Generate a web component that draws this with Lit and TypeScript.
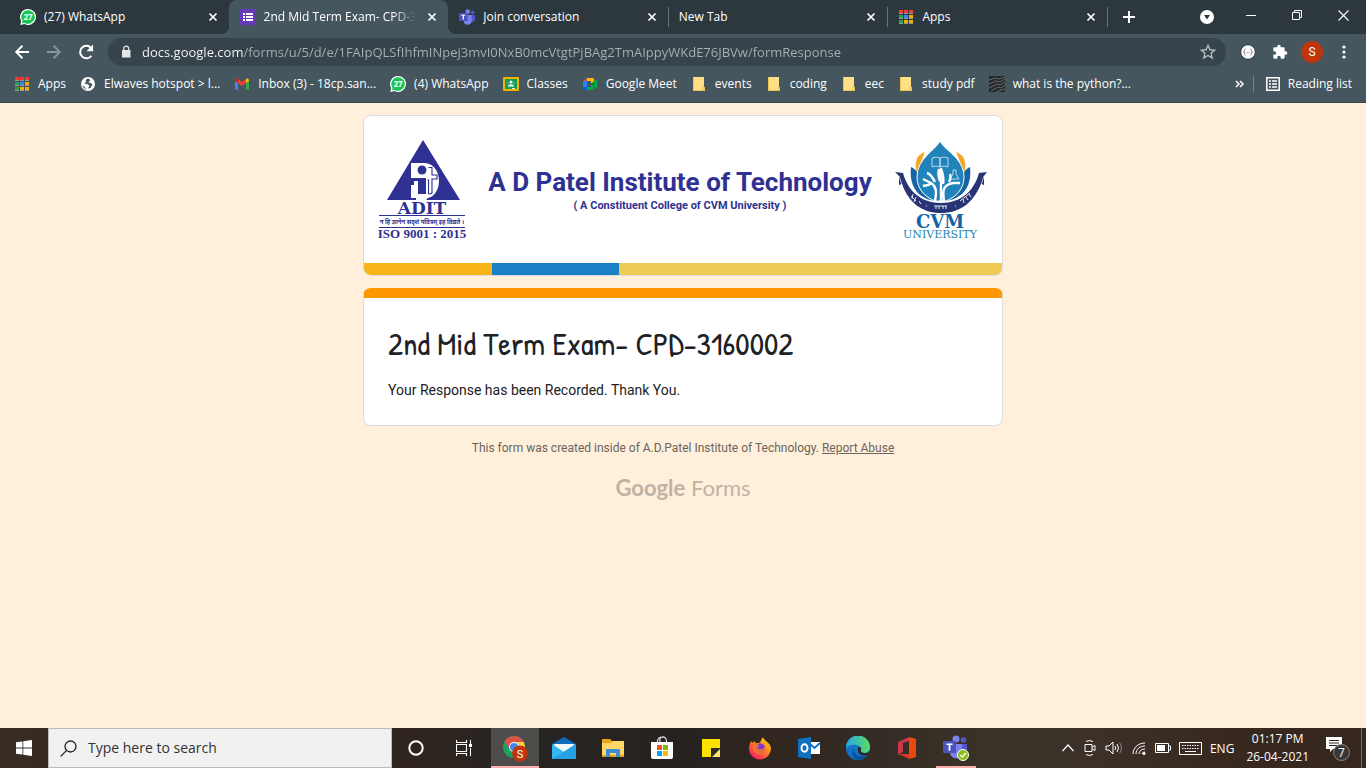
import { LitElement, html, css, svg, TemplateResult } from "lit";
import { customElement } from "lit/decorators.js";
import { classMap } from "lit/directives/class-map.js";

const whatsapp = html`<svg width="16" height="16" viewBox="0 0 16 16" aria-hidden="true">
  <path d="M8 0a8 8 0 1 1-3.6 15.1L.3 15.9l.9-3.8A8 8 0 0 1 8 0Z" fill="#fff"/>
  <path d="M8 1.2A6.8 6.8 0 1 1 4.600 13.900L2 14.300l.6-2.400A6.800 6.800 0 0 1 8 1.200Z" fill="#13c552"/>
  <text x="8" y="11" font-size="8" font-weight="700" text-anchor="middle" fill="#fff">27</text></svg>`;

const forms = html`<svg width="16" height="16" viewBox="0 0 16 16" aria-hidden="true">
  <rect width="16" height="16" fill="#673ab7"/>
  <path d="M3 4h2v2H3zM6 4h7v2H6zM3 7h2v2H3zM6 7h7v2H6zM3 10h2v2H3zM6 10h7v2H6z" fill="#fff"/></svg>`;

const teamsShapes = svg`
  <circle cx="20.500" cy="5" r="2.800" fill="#5059c9"/><path d="M17 9h7v7a4 4 0 0 1-7 2Z" fill="#5059c9"/>
  <circle cx="13" cy="4" r="3.500" fill="#7b83eb"/><path d="M7 9h12v8a6 6 0 0 1-12 1Z" fill="#7b83eb"/>
  <rect x="0" y="6" width="13" height="12" rx="1" fill="#4b53bc"/>
  <path d="M3.500 8.500h6v1.600H7.400v5.600H5.600v-5.600H3.500Z" fill="#fff"/>`;

const teams = html`<svg width="16" height="16" viewBox="0 0 24 24" aria-hidden="true">${teamsShapes}</svg>`;

const appsGrid = html`<svg width="14" height="14" viewBox="0 0 14 14" aria-hidden="true">
  <path d="M0 0h4v3H0zM5 0h4v3H5zM10 0h4v3h-4z" fill="#f03a32"/>
  <path d="M0 3h4v1H0zM5 3h4v1H5zM10 3h4v1h-4zM0 8h4v1H0zM5 8h4v1H5zM10 8h4v1h-4zM0 13h4v1H0zM5 13h4v1H5zM10 13h4v1h-4z" fill="#8c9aa2"/>
  <path d="M0 5h4v3H0zM0 10h4v3H0z" fill="#2ba24c"/><path d="M5 5h4v3H5z" fill="#3f83f2"/>
  <path d="M10 5h4v3h-4zM5 10h4v3H5zM10 10h4v3h-4z" fill="#f9ab00"/></svg>`;

const globe = html`<svg width="16" height="16" viewBox="0 0 16 16" aria-hidden="true">
  <circle cx="8" cy="8" r="7" fill="#fff"/>
  <path d="M8 2.500 5.500 4l.8 1.800L4 7.500l3 .5 2.500 1.500L8 12.500 10.500 12l2-3.500L10 6.500H8.200L10.500 4Z M1.600 9.500 5 11l1 3Z" fill="#45565f"/></svg>`;

const gmail = html`<svg width="16" height="16" viewBox="0 0 16 16" aria-hidden="true">
  <path d="M1 4v9.500h3V7Z" fill="#4285f4"/><path d="M15 4v9.500h-3V7Z" fill="#34a853"/>
  <path d="M1 4.500A1.800 1.800 0 0 1 4 3l4 3 4-3v4L8 10 4 7Z" fill="#ea4335"/>
  <path d="M1 4.500A1.800 1.800 0 0 1 4 3v4L1 5Z" fill="#c5221f"/><path d="M15 4.500A1.800 1.800 0 0 0 12 3v4l3-2Z" fill="#fbbc04"/></svg>`;

const classroom = html`<svg width="16" height="14" viewBox="0 0 16 14" aria-hidden="true">
  <rect width="16" height="14" rx="1" fill="#f4b400"/><rect x="2" y="2" width="12" height="10" fill="#0f9d58"/>
  <circle cx="8" cy="5" r="1.500" fill="#fff"/><circle cx="5" cy="6" r="1" fill="#57bb8a"/><circle cx="11" cy="6" r="1" fill="#57bb8a"/>
  <path d="M5 9.500c0-3 6-3 6 0Z" fill="#fff"/><path d="M9 11h3v1H9Z" fill="#f1f1f1"/></svg>`;

const meet = html`<svg width="16" height="14" viewBox="0 0 16 14" aria-hidden="true">
  <path d="M1 4 5 1v3Z" fill="#ea4335"/><path d="M1 4h4v6H1Z" fill="#2684fc"/><path d="M1 10h4v3H2a1 1 0 0 1-1-1Z" fill="#0066da"/>
  <path d="M5 10h6v2a1 1 0 0 1-1 1H5Z" fill="#00ac47"/><path d="M5 1h6a1 1 0 0 1 1 1v4H9V4H5Z" fill="#ffba00"/>
  <path d="M9 7l5.500-4.500q.8-.4.8.500v8q0 .9-.8.500L12 9.500V12H9Z" fill="#00ac47"/><path d="M9 7l3-2.500v5Z" fill="#00832d"/></svg>`;

const folder = html`<svg width="12" height="14" viewBox="0 0 12 14" aria-hidden="true">
  <path d="M0 0h11v10h1v4H0Z" fill="#ffe089"/><path d="M.5 0v13.500h11V10h-1.500v3" fill="none" stroke="#edc24f"/></svg>`;

const pythonThumb = html`<svg width="16" height="16" viewBox="0 0 16 16" aria-hidden="true">
  <rect width="16" height="16" fill="#26282b"/>
  <path d="M0 4 6 2l4 1 6-2M0 8l7-3 4 1 5-3M0 12l8-4 3 1 5-3M2 15l7-4 3 1 4-3M7 16l5-2 4-1" fill="none" stroke="#777b80" stroke-width=".8"/></svg>`;

const closeX = html`<svg width="16" height="16" viewBox="0 0 16 16" aria-hidden="true">
  <path d="m4.500 4.500 7 7m0-7-7 7" stroke="#fff" stroke-width="1.700"/></svg>`;

const icon24 = (body: unknown, size = 20) =>
  html`<svg width=${size} height=${size} viewBox="0 0 24 24" aria-hidden="true">${body}</svg>`;

const adit = html`<svg width="88" height="106" viewBox="0 0 88 106" role="img" aria-label="ADIT">
  <path d="M45 4 82 64H9Z" fill="#2e3192"/>
  <path d="M33 27h14c10 1 14 10 14 18 0 9-5 16-11 17l-2 2H38V62h-5V49h3v-7h-3Z" fill="#fff"/>
  <circle cx="44" cy="34" r="4.500" fill="#2e3192"/><path d="M36 42h12v16h-8V45h-4Z" fill="#2e3192"/>
  <path d="M50.500 58V44h-1M50.500 31.500h3.500V39h5v4h-5v14q-1 1-3.500 1" fill="none" stroke="#2e3192" stroke-width="1.100"/>
  <text class="slab" x="44" y="78" font-size="17" text-anchor="middle" fill="#2e3192">ADIT</text>
  <path d="M1 79.500h86M1 91.500h86" stroke="#2e3192"/>
  <text class="motto" x="44" y="88" font-size="6" text-anchor="middle" fill="#2e3192">न हि ज्ञानेन सदृशं पवित्रम् इह विद्यते ।</text>
  <text class="serif" x="44" y="102" font-size="13" text-anchor="middle" fill="#2e3192">ISO 9001 : 2015</text></svg>`;

const cvm = html`<svg width="94" height="106" viewBox="0 0 94 106" role="img" aria-label="CVM University">
  <path d="M29 18q-8 4-6 16ZM64 18q8 4 6 16Z" fill="#f5a623" stroke="#f5a623" stroke-width="2"/>
  <path d="M17 31q8 3 10 19l14 15C22 62 15 48 17 31ZM76 31q-8 3-10 19L52 65C71 62 78 48 76 31Z" fill="#1565a5"/>
  <path d="M46 5C51 15 70 22 70 41c0 12-8 20-18 24H41C31 61 23 53 23 41 23 22 41 15 46 5Z" fill="#2283bb" stroke="#fff"/>
  <path d="M41 65c2-10 1-15-4-18l-8-4m8 4c-2 3-5 2-8 3m12-4c-2-4-4-8-8-9m13 8c-2-5-2-8-1-12m2 35V32m3 33c-2-12 0-16 9-18h7m-11-1c2-3 2-5 1-8m-7 10c1-5 0-10-2-15" fill="none" stroke="#fff" stroke-width="2.400"/>
  <path d="M38 22q4-2 8 0v9q-4-2-8 0ZM54 22q-4-2-8 0v9q4-2 8 0ZM59 34h3v4l3 5h-9l3-5Z" fill="none" stroke="#d7edf8" stroke-width=".8"/>
  <path d="M1 36l8 1c5 18 18 30 38 30s33-12 38-30l8-1-3 4v9l-3-1C79 67 66 77 47 77S15 67 8 48l-3 1V40Z" fill="#293477"/>
  <path d="M5 40l3 9M90 40l-3 9" stroke="#fff" stroke-width=".7"/>
  <path d="M17 60l5 5m-3-7-1 5m4-2-2 5m5-1 2 3M40 70h13m-11 0v3m3-3v3m4-3v3m3-3v3M66 65l10-8m-7 6 1 4m2-6 2 3m1-6 2 3M32 70h1m28 0h1" fill="none" stroke="#e4e6f4"/>
  <text class="slab" x="46" y="92" font-size="18" text-anchor="middle" fill="#1464a5">CVM</text>
  <text class="uni" x="46" y="102" font-size="11" text-anchor="middle" fill="#2385b5">UNIVERSITY</text></svg>`;

interface Tab { title: string; icon?: TemplateResult; active?: boolean; ruled?: boolean }
const tabs: Tab[] = [
  { title: "(27) WhatsApp", icon: whatsapp },
  { title: "2nd Mid Term Exam- CPD-3160002", icon: forms, active: true },
  { title: "Join conversation", icon: teams },
  { title: "New Tab", ruled: true },
  { title: "Apps", icon: appsGrid, ruled: true },
];

const bookmarks: { label: string; icon: TemplateResult }[] = [
  { label: "Apps", icon: appsGrid },
  { label: "Elwaves hotspot > l...", icon: globe },
  { label: "Inbox (3) - 18cp.san...", icon: gmail },
  { label: "(4) WhatsApp", icon: whatsapp },
  { label: "Classes", icon: classroom },
  { label: "Google Meet", icon: meet },
  { label: "events", icon: folder },
  { label: "coding", icon: folder },
  { label: "eec", icon: folder },
  { label: "study pdf", icon: folder },
  { label: "what is the python?...", icon: pythonThumb },
];

@customElement("browser-chrome")
export class BrowserChrome extends LitElement {
  static styles = css`
    :host { display: block; font-family: "Open Sans", "Noto Sans", sans-serif; font-size: 12px; color: #fff; }
    svg { display: block; flex: none; }
    button { border: 0; padding: 0; background: none; color: inherit; font: inherit; display: grid; place-items: center; flex: none; }
    .strip { display: flex; height: 34px; padding-left: 9px; background: #2c373e; }
    .tabs { display: flex; flex: 0 1 1098px; min-width: 0; }
    .tab { flex: 1 1 0; min-width: 0; display: flex; align-items: center; gap: 8px; padding: 0 8px 0 11px; position: relative; }
    .icon { width: 16px; display: grid; place-items: center; flex: none; }
    .name { flex: 1; min-width: 0; overflow: hidden; white-space: nowrap; line-height: 20px; }
    .active { background: #45565f; border-radius: 8px 8px 0 0; }
    .active .name { mask-image: linear-gradient(to right, #000 85%, transparent); }
    .active::before, .active::after { content: ""; position: absolute; bottom: 0; width: 8px; height: 8px; }
    .active::before { right: 100%; background: radial-gradient(circle at 0 0, transparent 8px, #45565f 8px); }
    .active::after { left: 100%; background: radial-gradient(circle at 100% 0, transparent 8px, #45565f 8px); }
    .ruled::before { content: ""; position: absolute; left: 0; top: 7px; height: 20px; width: 1px; background: #6a757c; }
    .add { width: 44px; position: relative; }
    .grow { flex: 1; }
    .menu { width: 42px; }
    .win { width: 46px; height: 30px; }
    .bar { background: #45565f; border-bottom: 1px solid #36444c; }
    .nav { display: flex; align-items: center; height: 36px; padding: 0 6px; }
    .tool { width: 32px; height: 28px; }
    .omni { flex: 1; min-width: 0; display: flex; align-items: center; height: 28px; margin: 0 6px; padding: 0 8px 0 11px; gap: 9px; border-radius: 14px; background: #37444c; }
    .url { flex: 1; min-width: 0; border: 0; padding: 0; height: 28px; outline: 0; font: inherit; font-size: 13px;
      background: linear-gradient(to right, #fff 101px, #a9b1b5 101px); background-clip: text; -webkit-background-clip: text; color: transparent; }
    .avatar { width: 22px; height: 22px; border-radius: 50%; background: #bf360c; display: grid; place-items: center; font-family: Roboto, sans-serif; }
    .marks { display: flex; align-items: center; height: 28px; padding: 0 14px 4px; gap: 14px; }
    .mark { display: flex; align-items: center; gap: 8px; color: #fff; text-decoration: none; white-space: nowrap; line-height: 20px; }
    .rule { width: 1px; height: 16px; background: #72808a; }
    .tail { display: flex; align-items: center; gap: 8px; }
    .tail .mark { margin-left: 4px; }
  `;

  render() {
    return html`
      <div class="strip">
        <div class="tabs" role="tablist">
          ${tabs.map((t) => html`
            <div class=${classMap({ tab: true, active: !!t.active, ruled: !!t.ruled })} role="tab" aria-selected=${t.active ? "true" : "false"}>
              ${t.icon ? html`<span class="icon">${t.icon}</span>` : null}
              <span class="name">${t.title}</span>
              <button aria-label="Close tab">${closeX}</button>
            </div>`)}
        </div>
        <button class="add ruled" aria-label="New tab"><svg width="14" height="14" viewBox="0 0 14 14"><path d="M7 1v12M1 7h12" stroke="#fff" stroke-width="2"/></svg></button>
        <span class="grow"></span>
        <button class="menu" aria-label="Search tabs"><svg width="14" height="14" viewBox="0 0 14 14"><circle cx="7" cy="7" r="7" fill="#fff"/><path d="M4 5h6L7 9.500Z" fill="#2c373e"/></svg></button>
        <button class="win" aria-label="Minimize"><svg width="10" height="10" viewBox="0 0 10 10"><path d="M0 5.500h10" stroke="#fff"/></svg></button>
        <button class="win" aria-label="Restore"><svg width="10" height="10" viewBox="0 0 10 10"><path d="M.5 2.500h7v7h-7zM2.500 2.500v-2h7v7h-2" fill="none" stroke="#fff"/></svg></button>
        <button class="win" aria-label="Close window"><svg width="11" height="11" viewBox="0 0 11 11"><path d="m.5.5 10 10m0-10-10 10" stroke="#fff" stroke-width="1.100"/></svg></button>
      </div>
      <div class="bar">
        <div class="nav">
          <button class="tool" aria-label="Back">${icon24(svg`<path d="M20.500 12H5m7.500-7.500L5 12l7.500 7.500" fill="none" stroke="#fff" stroke-width="2.200"/>`)}</button>
          <button class="tool" aria-label="Forward">${icon24(svg`<path d="M3.500 12H19m-7.500-7.500L19 12l-7.500 7.500" fill="none" stroke="#8a959b" stroke-width="2.200"/>`)}</button>
          <button class="tool" aria-label="Reload">${icon24(svg`<path d="M18.500 16.500A7.500 7.500 0 1 1 18 7" fill="none" stroke="#fff" stroke-width="2.400"/><path d="M20.500 3v8h-8Z" fill="#fff"/>`)}</button>
          <div class="omni">
            <svg width="14" height="14" viewBox="0 0 14 14" aria-hidden="true"><path d="M3 5h8.500v7.500H3Z" fill="#e3e6e8"/><path d="M4.800 5V3.500a2.400 2.400 0 0 1 4.800 0V5" fill="none" stroke="#e3e6e8" stroke-width="1.300"/></svg>
            <input class="url" aria-label="Address" spellcheck="false" value="docs.google.com/forms/u/5/d/e/1FAIpQLSfIhfmINpej3mvI0NxB0mcVtgtPjBAg2TmAIppyWKdE76JBVw/formResponse">
            <button aria-label="Bookmark this page">${icon24(svg`<path d="m12 4 2.300 5.300 5.700.5-4.300 3.800 1.300 5.600-5-3-5 3 1.300-5.600L4 9.800l5.700-.5Z" fill="none" stroke="#b9c0c4" stroke-width="1.600"/>`)}</button>
          </div>
          <button class="tool" aria-label="JSON extension"><svg width="16" height="16" viewBox="0 0 16 16"><circle cx="8" cy="8" r="7.300" fill="#fff" stroke="#2c373e" stroke-width="1"/><path d="M5.500 5Q4.500 5 4.500 6.500T3.500 8q1 0 1 1.500T5.500 11M10.500 5q1 0 1 1.500t1 1.500q-1 0-1 1.500t-1 1.500M6.500 8.500h1m1 0h1" fill="none" stroke="#666" stroke-width=".9"/></svg></button>
          <button class="tool" aria-label="Extensions">${icon24(svg`<path d="M20.500 11H19V7a2 2 0 0 0-2-2h-4V3.500a2.500 2.500 0 0 0-5 0V5H4a2 2 0 0 0-2 2v3.800h1.500a2.700 2.700 0 0 1 0 5.400H2V20a2 2 0 0 0 2 2h3.800v-1.500a2.700 2.700 0 0 1 5.400 0V22H17a2 2 0 0 0 2-2v-4h1.500a2.500 2.500 0 0 0 0-5Z" fill="#fff"/>`, 16)}</button>
          <button class="tool" aria-label="Profile"><span class="avatar">S</span></button>
          <button class="tool" aria-label="Menu"><svg width="4" height="14" viewBox="0 0 4 14"><circle cx="2" cy="2" r="1.600" fill="#fff"/><circle cx="2" cy="7" r="1.600" fill="#fff"/><circle cx="2" cy="12" r="1.600" fill="#fff"/></svg></button>
        </div>
        <nav class="marks" aria-label="Bookmarks">
          ${bookmarks.map((b) => html`<a class="mark" href="#"><span class="icon">${b.icon}</span>${b.label}</a>`)}
          <span class="grow"></span>
          <span class="tail">
            <button aria-label="More bookmarks"><svg width="10" height="8" viewBox="0 0 10 8"><path d="m1 1 3 3-3 3m4-6 3 3-3 3" fill="none" stroke="#fff" stroke-width="1.500"/></svg></button>
            <span class="rule"></span>
            <a class="mark" href="#"><svg width="14" height="14" viewBox="0 0 14 14"><path d="M.8.8h12.400v12.400H.8Z" fill="none" stroke="#fff" stroke-width="1.500"/><path d="M3 4h2m1 0h5M3 7h2m1 0h5M3 10h2m1 0h5" stroke="#fff" stroke-width="1.500"/></svg>Reading list</a>
          </span>
        </nav>
      </div>`;
  }
}

@customElement("form-page")
export class FormPage extends LitElement {
  static styles = css`
    :host { display: block; background: #ffefdb; font-family: Roboto, sans-serif; padding: 12px; }
    .column { max-width: 640px; margin: 0 auto; display: flex; flex-direction: column; gap: 12px; }
    svg { display: block; flex: none; }
    .slab { font-family: "DejaVu Serif", serif; font-weight: 700; }
    .serif { font-family: "Liberation Serif", serif; font-weight: 700; }
    .uni { font-family: "DejaVu Serif", serif; }
    .motto { font-family: "Noto Sans Devanagari", "Noto Sans", sans-serif; font-weight: 700; }
    .banner { background: #fff; border: 1px solid #dadce0; border-radius: 8px; overflow: hidden; }
    .brand { display: flex; align-items: center; justify-content: space-between; padding: 20px 14px 21px; }
    .words { text-align: center; color: #2e3192; font-weight: 700; padding-top: 2px; }
    .college { font-size: 26px; line-height: 32px; }
    .sub { font-size: 11px; line-height: 16px; }
    .stripe { display: grid; grid-template-columns: 1fr 1fr 3fr; height: 12px; }
    .amber { background: #f9b517; }
    .blue { background: #1c80c4; }
    .straw { background: #efca55; }
    .card { background: #fff; border: 1px solid #dadce0; border-top: 10px solid #ff9800; border-radius: 8px; padding: 24px 24px 25px; color: #202124; }
    h1 { margin: 0 0 14px; font-family: "Patrick Hand", Lato, sans-serif; font-weight: 400; font-size: 32px; line-height: 44px; }
    .note { margin: 0; font-size: 14px; line-height: 20px; }
    .origin { margin: 0; text-align: center; font-size: 12px; line-height: 20px; color: #6b655d; }
    .origin a { color: inherit; }
    .logo { text-align: center; font-family: Lato, sans-serif; font-size: 22px; line-height: 36px; color: #bfb3a4; text-decoration: none; }
    .logo b { font-weight: 700; }
  `;

  render() {
    return html`
      <main class="column">
        <div class="banner">
          <div class="brand">
            ${adit}
            <div class="words">
              <div class="college">A D Patel Institute of Technology</div>
              <div class="sub">( A Constituent College of CVM University )</div>
            </div>
            ${cvm}
          </div>
          <div class="stripe"><span class="amber"></span><span class="blue"></span><span class="straw"></span></div>
        </div>
        <section class="card">
          <h1>2nd Mid Term Exam- CPD-3160002</h1>
          <p class="note">Your Response has been Recorded. Thank You.</p>
        </section>
        <p class="origin">This form was created inside of A.D.Patel Institute of Technology. <a href="#">Report Abuse</a></p>
        <a class="logo" href="#"><b>Google</b> Forms</a>
      </main>`;
  }
}

const task = (label: string, art: TemplateResult, cls = "") =>
  html`<button class="task ${cls}" aria-label=${label}>${art}</button>`;

@customElement("task-bar")
export class TaskBar extends LitElement {
  static styles = css`
    :host { display: flex; height: 40px; color: #fff; font-family: "Open Sans", "Noto Sans", sans-serif; font-size: 12px;
      background: linear-gradient(to right, #382d24, #2f241e 30%, #262422 40%, #262220 50%, #30261f 56%, #3a3129 72%, #3b3129 80%, #38291f 90%, #35261f); }
    svg { display: block; flex: none; }
    button { border: 0; padding: 0; background: none; color: inherit; font: inherit; display: grid; place-items: center; flex: none; }
    .start, .plain { width: 48px; }
    .search { flex: 0 1 344px; min-width: 0; box-sizing: border-box; display: flex; align-items: center; gap: 11px; padding: 0 11px; background: #f1f1f1; border: 1px solid #bcbcbc; }
    .search input { flex: 1; min-width: 0; border: 0; padding: 0; background: none; outline: 0; font: inherit; font-size: 14px; line-height: 20px; color: #333; }
    .search input::placeholder { color: #333; opacity: 1; }
    .apps { display: flex; gap: 1px; margin-left: 3px; }
    .task { width: 48px; position: relative; }
    .lit { background: #4d4c4a; }
    .lit::after, .open::after { content: ""; position: absolute; bottom: 0; left: 0; right: 0; height: 2px; background: #ffaeae; }
    .open::after { left: 4px; right: 4px; }
    .grow { flex: 1; }
    .tray { display: flex; align-items: center; gap: 8px; }
    .clock { text-align: center; line-height: 18px; margin-left: 4px; }
    .bell { width: 48px; height: 40px; margin-left: 4px; }
    .peek { width: 4px; border-left: 1px solid #77706a; }
  `;

  render() {
    return html`
      <button class="start" aria-label="Start"><svg width="16" height="16" viewBox="0 0 16 16"><path d="M0 2.300 6.500 1.400v6.200H0ZM7.300 1.300 16 0v7.600H7.300ZM0 8.400h6.500v6.200L0 13.700ZM7.300 8.400H16V16l-8.700-1.300Z" fill="#fff"/></svg></button>
      <label class="search">
        <svg width="17" height="17" viewBox="0 0 17 17" aria-hidden="true"><circle cx="10.500" cy="6.500" r="5.500" fill="none" stroke="#222" stroke-width="1.300"/><path d="M6.600 10.400.6 16.400" stroke="#222" stroke-width="1.300"/></svg>
        <input type="text" aria-label="Search" placeholder="Type here to search">
      </label>
      <button class="plain" aria-label="Cortana"><svg width="16" height="16" viewBox="0 0 16 16"><circle cx="8" cy="8" r="6.700" fill="none" stroke="#fff" stroke-width="2"/></svg></button>
      <button class="plain" aria-label="Task view"><svg width="16" height="16" viewBox="0 0 16 16"><path d="M.5 0v2.500h10V0M.5 16v-2.500h10V16M.5 4.500h10v7H.5ZM14.500 0v4M14.500 8v8" fill="none" stroke="#fff" stroke-width="1.100"/><path d="M13 4h3v3h-3Z" fill="#fff"/></svg></button>
      <div class="apps">
        ${task("Chrome", html`<svg width="28" height="28" viewBox="0 0 28 28"><g transform="translate(2 2)"><circle cx="11" cy="11" r="11" fill="#1aa260"/><path d="M1.500 5.500A11 11 0 0 1 20.800 6H11a5 5 0 0 0-4.500 7Z" fill="#de5246"/><path d="M20.800 6A11 11 0 0 1 11 22l4.500-8.500A5 5 0 0 0 11 6Z" fill="#ffce44"/><circle cx="11" cy="11" r="5" fill="#fff"/><circle cx="11" cy="11" r="4" fill="#4285f4"/></g><circle cx="19" cy="19.500" r="8" fill="#bf360c"/><text x="19" y="23.500" font-size="11" text-anchor="middle" fill="#fff" font-family="Roboto">S</text></svg>`, "lit")}
        ${task("Mail", html`<svg width="24" height="24" viewBox="0 0 24 24"><path d="M0 8 12 1l12 7v15H0Z" fill="#0f6cbd"/><path d="M2 8h20v8H2Z" fill="#f4f8fb"/><path d="M0 8l12 8L24 8v15H0Z" fill="#35b8f1"/><path d="M24 8v15H0Z" fill="#28a0e4"/><path d="M2 8h20l-10 7Z" fill="#f4f8fb"/></svg>`)}
        ${task("File Explorer", html`<svg width="22" height="20" viewBox="0 0 22 20"><path d="M0 1h8l2 2h12v16H0Z" fill="#e8a317"/><path d="M0 5h9l2-2h11v14H0Z" fill="#ffd766"/><path d="M4 11h14v8h-4v-4H8v4H4Z" fill="#3d8fd1"/></svg>`)}
        ${task("Store", html`<svg width="24" height="24" viewBox="0 0 24 24"><path d="M7.500 8V5a4.500 4 0 0 1 9 0v3M10 7V5a3 3 0 0 1 6-2" fill="none" stroke="#ddd" stroke-width="1.200"/><path d="M1 6h22v15a2 2 0 0 1-2 2H3a2 2 0 0 1-2-2Z" fill="#fff"/><path d="M7 9h5v5H7Z" fill="#f25022"/><path d="M13 9h5v5h-5Z" fill="#7fba00"/><path d="M7 15h5v5H7Z" fill="#00a4ef"/><path d="M13 15h5v5h-5Z" fill="#ffb900"/></svg>`)}
        ${task("Sticky Notes", html`<svg width="18" height="18" viewBox="0 0 18 18"><path d="M0 0h18v9h-9v9H0Z" fill="#ffe100"/><path d="M18 9v1l-8 8H9V9Z" fill="#2b2a26"/><path d="M18 10v8h-8Z" fill="#ffe773"/></svg>`)}
        ${task("Firefox", html`<svg width="24" height="24" viewBox="0 0 24 24"><defs><linearGradient id="ff" x1="1" y1="0" x2=".2" y2="1"><stop stop-color="#ffe226"/><stop offset=".45" stop-color="#ff8a16"/><stop offset="1" stop-color="#f5156c"/></linearGradient></defs><path d="M3 5l2 2 1-2 2 2h3c2-1 2-4 4-6 1 4 7 5 8 11A11 11 0 0 1 1 13C1 9 2 8 3 5Z" fill="url(#ff)"/><circle cx="12" cy="12.500" r="5.200" fill="#7a35d8"/><path d="M5 9c3-2 5-1 7 1-3 0-3 2-1 3 3 1 5-1 6-3 1 5-2 9-6 8-4 0-7-4-6-9Z" fill="#ff7a1c" opacity=".8"/></svg>`)}
        ${task("Outlook", html`<svg width="22" height="22" viewBox="0 0 22 22"><path d="M12 5h10v12H12Z" fill="#fff"/><path d="m12 7 4.500 4L22 6" fill="none" stroke="#0f6fc0" stroke-width="2"/><path d="M0 2 13 0v22L0 20Z" fill="#0f6fc0"/><ellipse cx="6.500" cy="11" rx="3" ry="3.800" fill="none" stroke="#fff" stroke-width="2"/></svg>`)}
        ${task("Edge", html`<svg width="24" height="24" viewBox="0 0 24 24"><defs><linearGradient id="ed" x2="1"><stop stop-color="#22a6e8"/><stop offset="1" stop-color="#5fdc62"/></linearGradient></defs><circle cx="12" cy="12" r="12" fill="#1272c8"/><path d="M0 12a12 12 0 0 1 24-1c0 4-3 6-6 6-3 0-4-1-3-3 1-5-9-8-15-2Z" fill="url(#ed)"/><path d="M8 13c0 6 5 9 13 6a12 12 0 0 1-8 5C7 23 4 17 8 13Z" fill="#0c4f9f"/><path d="M12 12c1-2 4-1 3 1-1 3 1 4 4 4 2 0 3-.5 4.500-1.500L22 19c-6 2-11-1-10-7Z" fill="#2b2620"/></svg>`)}
        ${task("Office", html`<svg width="18" height="22" viewBox="0 0 18 22"><path d="M0 5 11 0v4L5 6v9l-5 3Z" fill="#c8384a"/><path d="M11 0l7 2v18l-7 2Z" fill="#e64a0e"/><path d="M1 17h10v5Z" fill="#d83b2a"/></svg>`)}
        ${task("Teams", html`<svg width="26" height="26" viewBox="0 0 26 26">${teamsShapes}<circle cx="20" cy="20" r="5.500" fill="#8cbd18" stroke="#fff"/><path d="m17.300 20 2 2 3.500-4" fill="none" stroke="#fff" stroke-width="1.400"/></svg>`, "open")}
      </div>
      <span class="grow"></span>
      <div class="tray">
        <svg width="14" height="14" viewBox="0 0 14 14"><path d="m1.500 10 5.500-6 5.500 6" fill="none" stroke="#fff" stroke-width="1.200"/></svg>
        <svg width="14" height="18" viewBox="0 0 14 18"><path d="M2 5.500h7v7H2ZM9 8l3-1.500v5L9 10M3 2.500q3-2 7 0M3 15.500q3 2 7 0" fill="none" stroke="#fff"/></svg>
        <svg width="18" height="16" viewBox="0 0 18 16"><path d="M1 6h3l4-4v12L4 10H1Z" fill="none" stroke="#fff"/><path d="M10 6q1.500 2 0 4M12 4q3 4 0 8" fill="none" stroke="#fff"/><path d="M14.500 2.500q4 5.500 0 11" fill="none" stroke="#888"/></svg>
        <svg width="16" height="16" viewBox="0 0 16 16"><path d="M2 14C2 8 7 3 14 3M5 14c0-5 4-8 9-8M8 14c0-3 3-5 6-5M11 14c0-1 1-2 3-2" fill="none" stroke="#fff"/><circle cx="13" cy="13.500" r="1.500" fill="#fff"/></svg>
        <svg width="16" height="10" viewBox="0 0 16 10"><path d="M.5.5h13v9H.5ZM14 3h1.500v4H14" fill="none" stroke="#fff"/><path d="M2 2h8v6H2Z" fill="#fff"/></svg>
        <svg width="23" height="13" viewBox="0 0 23 13"><path d="M.5.5h22v12H.5Z" fill="none" stroke="#fff"/><path d="M3 3.500h17M3 6.500h17" stroke="#fff" stroke-dasharray="1.500 1"/><path d="M6 9.500h11" stroke="#fff"/></svg>
        <span>ENG</span>
        <div class="clock"><div>01:17 PM</div><div>26-04-2021</div></div>
      </div>
      <button class="bell" aria-label="Notifications"><svg width="26" height="26" viewBox="0 0 26 26"><path d="M2 2h16v12H9l-3 3v-3H2Z" fill="#fff"/><path d="M5 5.500h10M5 8h10M5 10.500h8" stroke="#35261f"/><circle cx="17.500" cy="17.500" r="8" fill="#3a3836" stroke="#8a8683"/><text x="17.500" y="22" font-size="12" text-anchor="middle" fill="#fff">7</text></svg></button>
      <span class="peek"></span>`;
  }
}

@customElement("app-root")
export class AppRoot extends LitElement {
  static styles = css`
    :host { display: flex; flex-direction: column; min-height: 100vh; }
    .page { flex: 1; }
  `;

  render() {
    return html`<browser-chrome></browser-chrome><form-page class="page"></form-page><task-bar></task-bar>`;
  }
}
